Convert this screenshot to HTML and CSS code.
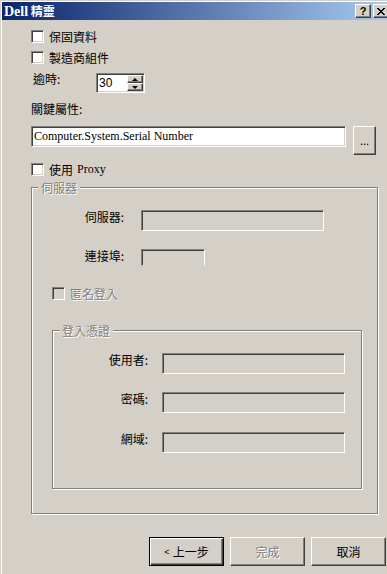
FILE: index.html
```html
<!DOCTYPE html>
<html lang="zh-Hant">

<head>
    <meta charset="utf-8">
    <title>Dell 精靈</title>
    <link rel="stylesheet" href="styles.css">
</head>

<body>
    <div class="window">
        <div class="titlebar">
            <span class="title"><span class="latin">Dell</span> 精靈</span>
            <div class="caption-buttons">
                <span class="cap-btn raised">?</span>
                <span class="cap-btn raised">
                    <svg width="8" height="7" viewBox="0 0 8 7">
                        <path d="M0 0h2v1H0zM6 0h2v1H6zM1 1h2v1H1zM5 1h2v1H5zM2 2h4v1H2zM3 3h2v1H3zM2 4h4v1H2zM1 5h2v1H1zM5 5h2v1H5zM0 6h2v1H0zM6 6h2v1H6z" fill="#000" />
                    </svg>
                </span>
            </div>
        </div>

        <div class="main">
            <label class="check warranty"><span class="box sunken"></span>保固資料</label>
            <label class="check vendor"><span class="box sunken"></span>製造商組件</label>

            <div class="timeout">
                <span class="timeout-label">逾時:</span>
                <div class="spinner sunken">
                    <span class="spin-value">30</span>
                    <div class="spin-buttons">
                        <span class="spin raised"><i class="arrow up"></i></span>
                        <span class="spin raised"><i class="arrow down"></i></span>
                    </div>
                </div>
            </div>

            <div class="key-label">關鍵屬性:</div>
            <div class="key-row">
                <div class="field sunken key-field">Computer.System.Serial Number</div>
                <span class="btn raised browse">...</span>
            </div>

            <label class="check proxy"><span class="box sunken"></span>使用 <span class="latin">Proxy</span></label>

            <fieldset class="group server">
                <legend>伺服器</legend>
                <div class="form-row server-row">
                    <span class="row-label">伺服器:</span>
                    <span class="field sunken disabled wide"></span>
                </div>
                <div class="form-row port-row">
                    <span class="row-label">連接埠:</span>
                    <span class="field sunken disabled port"></span>
                </div>
                <label class="check anon"><span class="box sunken disabled"></span><span class="dim">匿名登入</span></label>

                <fieldset class="group creds">
                    <legend>登入憑證</legend>
                    <div class="form-row user-row">
                        <span class="row-label">使用者:</span>
                        <span class="field sunken disabled wide"></span>
                    </div>
                    <div class="form-row pass-row">
                        <span class="row-label">密碼:</span>
                        <span class="field sunken disabled wide"></span>
                    </div>
                    <div class="form-row domain-row">
                        <span class="row-label">網域:</span>
                        <span class="field sunken disabled wide"></span>
                    </div>
                </fieldset>
            </fieldset>

            <div class="buttons">
                <span class="btn default"><span class="lt">&lt;</span>上一步</span>
                <span class="btn raised"><span class="dim">完成</span></span>
                <span class="btn raised">取消</span>
            </div>
        </div>
    </div>
</body>

</html>
```

FILE: styles.css
```css
body {
    margin: 0;
    background-color: #d4d0c8;
    font-family: "Noto Sans CJK TC", "Liberation Sans", sans-serif;
    font-size: 12px;
    color: #000;
    overflow: hidden;
}

.latin {
    font-family: "Liberation Serif", serif;
}

.dim {
    color: #808080;
    text-shadow: 1px 1px 0 #fff;
}

/* 3d borders, win classic */
.sunken {
    box-sizing: border-box;
    border: 1px solid;
    border-color: #808080 #fff #fff #808080;
    box-shadow: inset 1px 1px 0 #404040, inset -1px -1px 0 #d4d0c8;
    background-color: #fff;
}

.sunken.disabled {
    background-color: #d4d0c8;
}

.raised {
    box-sizing: border-box;
    border: 1px solid;
    border-color: #fff #404040 #404040 #fff;
    box-shadow: inset -1px -1px 0 #808080;
    background-color: #d4d0c8;
}

.window {
    margin: 1px 0 0 1px;
    border-top: 1px solid #fff;
    border-left: 1px solid #fff;
    height: 572px;
}

.titlebar {
    height: 18px;
    display: flex;
    align-items: center;
    justify-content: space-between;
    background: linear-gradient(to right, #0a246a, #a6caf0);
    color: #fff;
}

.title {
    padding-left: 2px;
    font-weight: bold;
    line-height: 18px;
}

.title .latin {
    font-size: 14px;
}

.caption-buttons {
    display: flex;
    gap: 2px;
    margin-right: -2px;
}

.cap-btn {
    width: 16px;
    height: 14px;
    display: flex;
    align-items: center;
    justify-content: center;
    color: #000;
    font-family: "Liberation Sans", sans-serif;
    font-weight: bold;
    font-size: 11px;
    line-height: 12px;
}

.main {
    padding: 0 9px 0 29px;
}

.check {
    display: flex;
    align-items: center;
    height: 13px;
    line-height: 13px;
}

.box {
    width: 13px;
    height: 13px;
    margin-right: 5px;
    flex-shrink: 0;
}

.warranty {
    margin-top: 10px;
}

.vendor {
    margin-top: 8px;
}

.timeout {
    display: flex;
    align-items: flex-start;
    margin-top: 9px;
}

.timeout-label {
    width: 63px;
    padding-left: 2px;
    line-height: 12px;
}

.spinner {
    width: 49px;
    height: 20px;
    padding: 1px;
    display: flex;
}

.spin-value {
    flex: 1;
    padding-left: 1px;
    font-family: "Liberation Sans", sans-serif;
    line-height: 16px;
}

.spin-buttons {
    width: 16px;
    display: flex;
    flex-direction: column;
}

.spin {
    height: 8px;
    display: flex;
    align-items: center;
    justify-content: center;
}

.arrow {
    width: 0;
    height: 0;
    border-left: 3px solid transparent;
    border-right: 3px solid transparent;
}

.arrow.up {
    border-bottom: 3px solid #000;
}

.arrow.down {
    border-top: 3px solid #000;
}

.key-label {
    margin-top: 9px;
    line-height: 14px;
}

.key-row {
    display: flex;
    align-items: flex-start;
    gap: 7px;
    margin-top: 10px;
}

.field {
    display: block;
    height: 21px;
}

.key-field {
    width: 315px;
    padding: 1px 2px;
    font-family: "Liberation Serif", serif;
    line-height: 17px;
    white-space: nowrap;
}

.btn {
    display: flex;
    align-items: center;
    justify-content: center;
    box-sizing: border-box;
}

.browse {
    width: 23px;
    height: 29px;
    font-family: "Liberation Serif", serif;
    padding-top: 2px;
}

.proxy {
    margin-top: 8px;
}

.proxy .latin {
    margin-left: 4px;
}

/* group boxes */
.group {
    margin: 0;
    padding: 0;
    min-width: 0;
    border: 1px solid #808080;
    box-shadow: inset 1px 1px 0 #fff, 1px 1px 0 #fff;
}

.group legend {
    padding: 0 3px;
    line-height: 15px;
    background-color: #d4d0c8;
    color: #808080;
    text-shadow: 1px 1px 0 #fff;
}

.server {
    margin-top: 4px;
    padding-bottom: 24px;
}

.server legend {
    margin-left: 6px;
}

.form-row {
    display: flex;
    align-items: flex-start;
}

.row-label {
    text-align: right;
    line-height: 13px;
}

.server .row-label {
    width: 92px;
    margin-right: 17px;
}

.wide {
    width: 183px;
}

.port {
    width: 64px;
    height: 17px;
    border-bottom-color: transparent;
}

.server-row {
    margin-top: 15px;
}

.port-row {
    margin-top: 18px;
}

.anon {
    margin: 21px 0 0 20px;
}

.creds {
    margin: 23px 0 0 20px;
    width: 308px;
    padding-bottom: 35px;
}

.creds legend {
    margin-left: 7px;
    padding: 0 3px 0 2px;
}

.creds .row-label {
    width: 95px;
    margin-right: 14px;
}

.user-row {
    margin-top: 15px;
}

.pass-row {
    margin-top: 18px;
}

.domain-row {
    margin-top: 19px;
}

.buttons {
    display: flex;
    justify-content: flex-end;
    gap: 6px;
    margin: 23px -8px 0 0;
}

.buttons .btn {
    width: 75px;
    height: 29px;
}

.btn.default {
    border: 1px solid #000;
    box-shadow: inset 1px 1px 0 #fff, inset -1px -1px 0 #404040, inset -2px -2px 0 #808080;
}

.lt {
    font-family: "Liberation Sans", sans-serif;
    font-size: 9px;
    margin-right: 3px;
}
```
